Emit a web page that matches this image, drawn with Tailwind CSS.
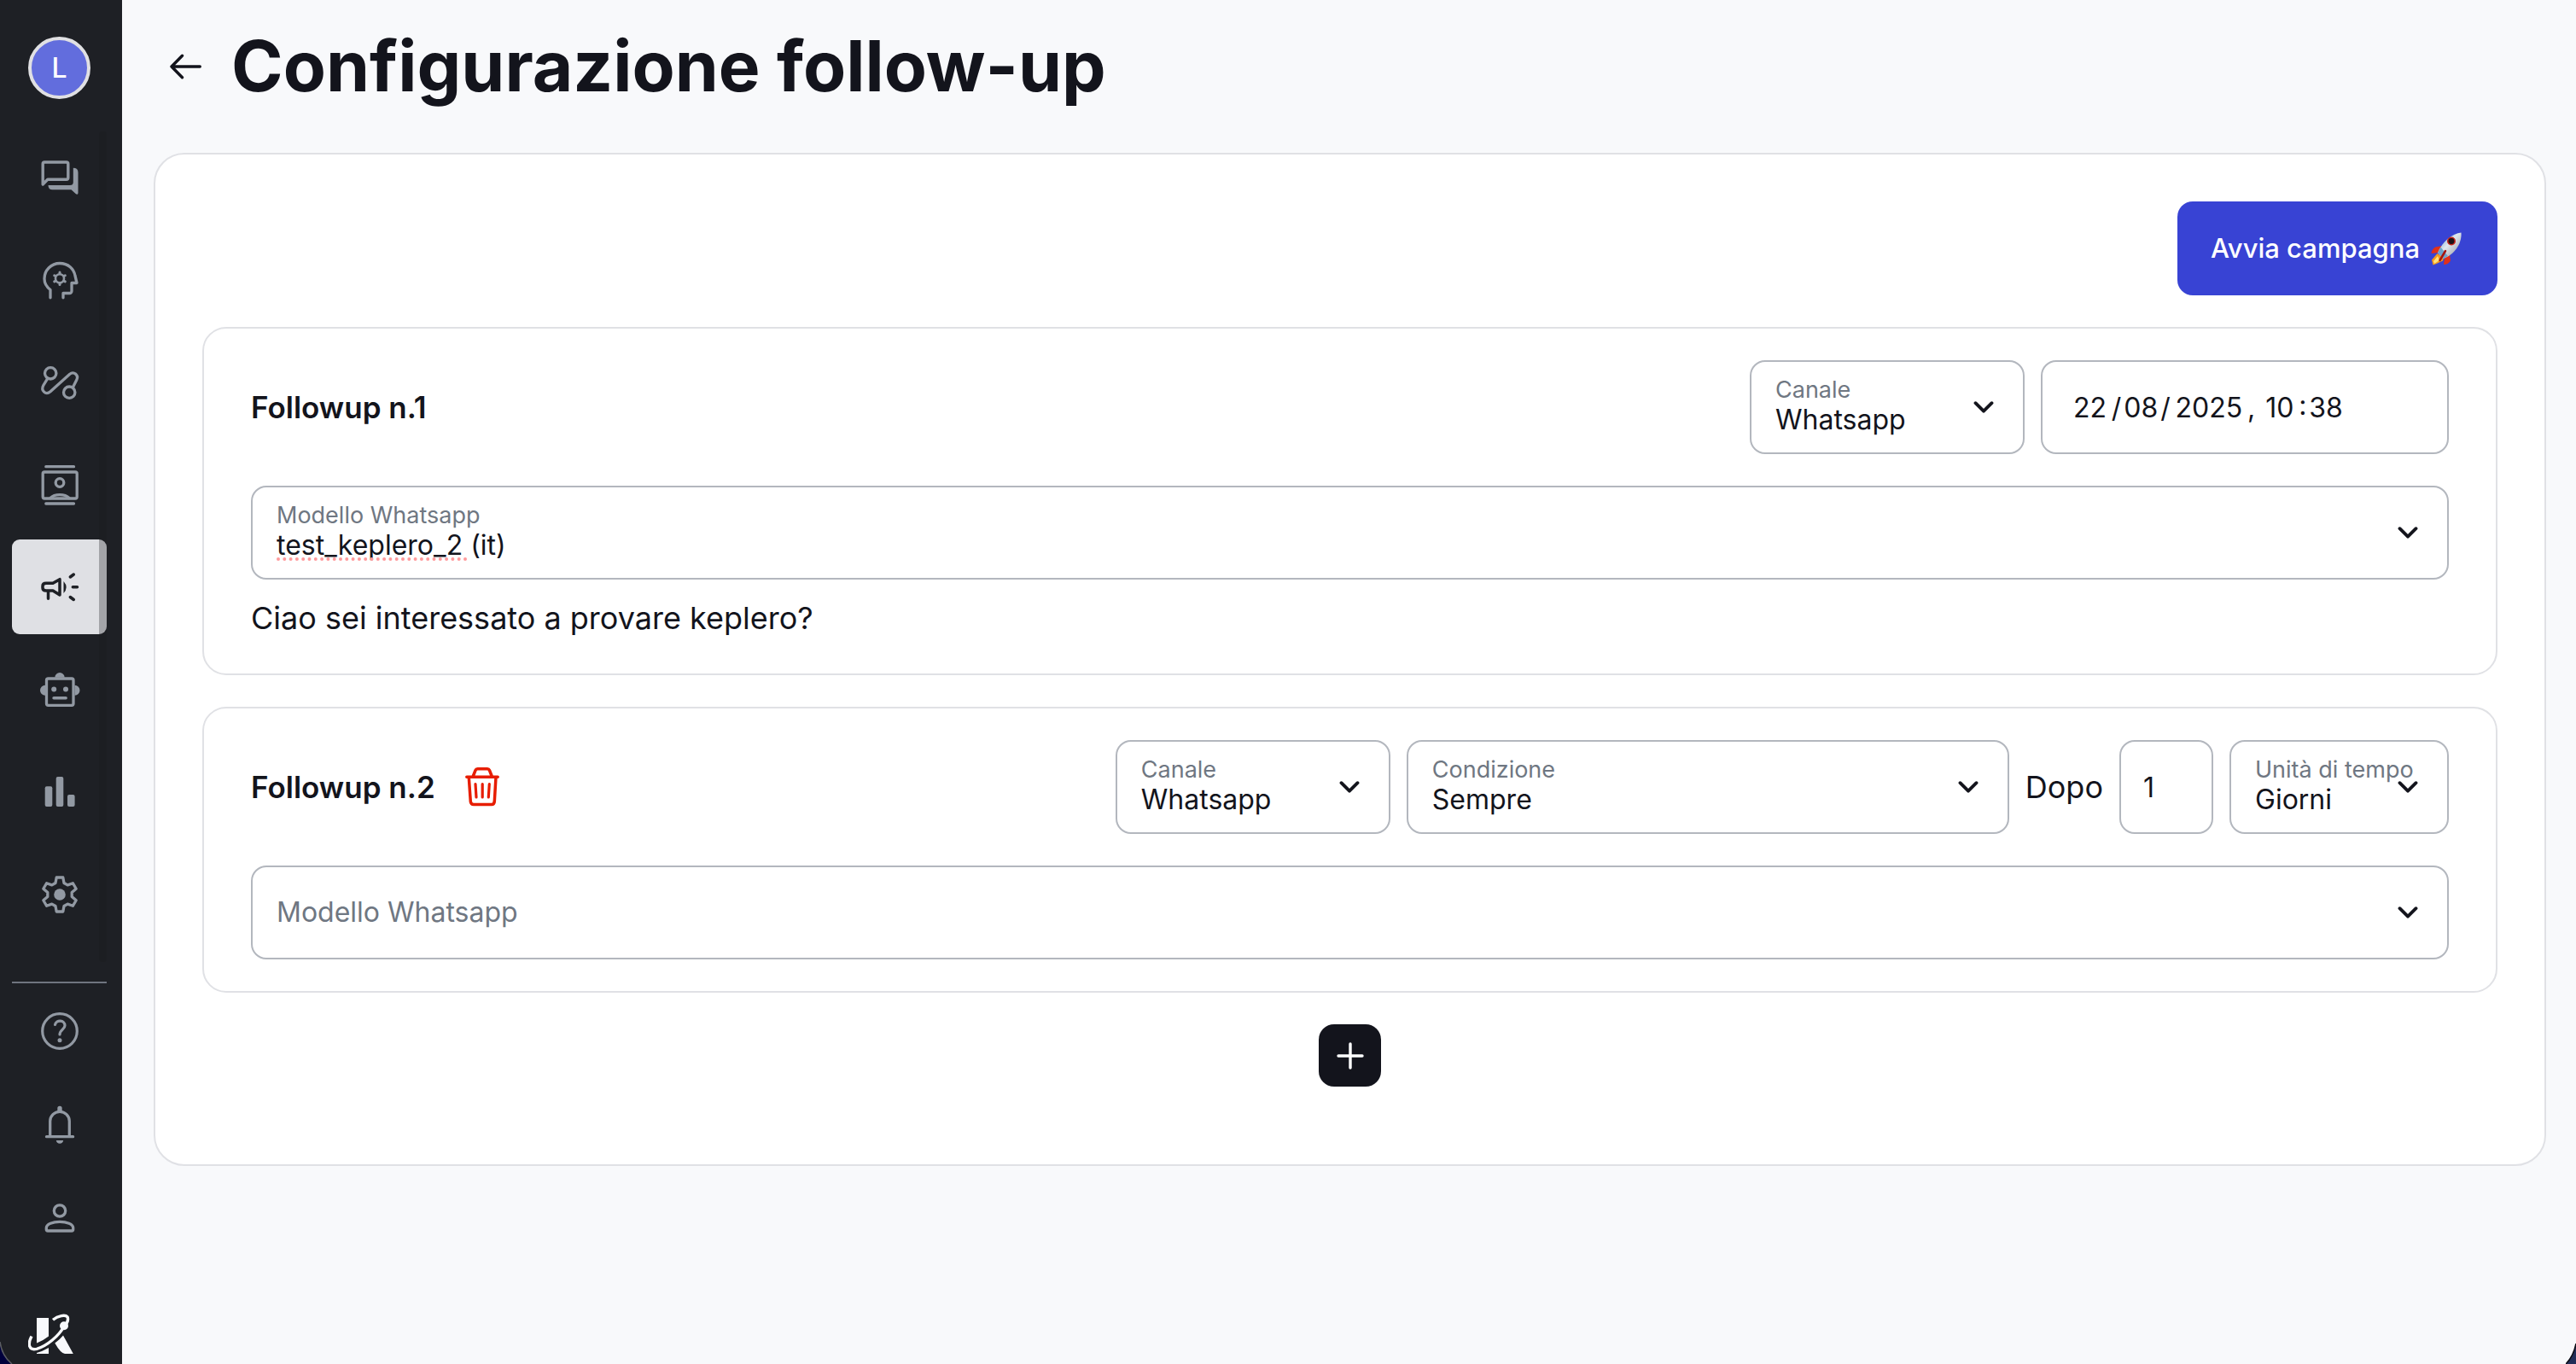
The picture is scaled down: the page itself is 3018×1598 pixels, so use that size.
<!DOCTYPE html>
<html lang="it">
<head>
<meta charset="utf-8">
<meta name="viewport" content="width=device-width, initial-scale=1">
<title>Configurazione follow-up</title>
<script src="https://cdn.jsdelivr.net/npm/@tailwindcss/browser@4"></script>
</head>
<body class="bg-[#f8f9fb] font-['Inter',sans-serif] text-[#13141c]">
<div class="relative flex min-h-screen">

  <!-- Sidebar -->
  <aside class="flex w-[143px] shrink-0 flex-col bg-[#1e2025] pl-[14px] pr-[18px] pt-[43px] text-[#9299a3]">
    <button type="button" aria-label="Account" class="flex size-[73px] items-center justify-center self-center rounded-full border-4 border-[#e0e0e3] bg-[#626ddd] text-[32px] font-medium leading-none text-white">L</button>

    <nav aria-label="Principale" class="relative mt-9 flex flex-col gap-[9px] pb-6">
      <a href="#" aria-label="Conversazioni" class="flex h-[111px] items-center justify-center rounded-[9px]">
        <svg class="size-12" viewBox="0 0 48 48" fill="none"><path d="M4.2 32V8a2 2 0 0 1 2-2H31.8a2 2 0 0 1 2 2V24.3a2 2 0 0 1-2 2H9.8Z" stroke="currentColor" stroke-width="3.4" stroke-linejoin="round"/><path d="M39.8 12.7Q45.5 12.7 45.5 18V42Q45.5 44.4 43 43.3L37.5 38.3H15.5Q10.5 38.3 10.5 33H36Q39.8 33 39.8 29.5Z" fill="currentColor"/></svg>
      </a>
      <a href="#" aria-label="Conoscenza" class="flex h-[111px] items-center justify-center rounded-[9px]">
        <svg class="size-12" viewBox="0 0 48 48" fill="none" stroke="currentColor" stroke-linecap="round" stroke-linejoin="round"><path d="M13 44.8V35.5C8.500 32 6 27.500 6 22.500A18 18 0 0 1 24 4.500C34 4.500 40.500 11 42 19L44 27.500H38V37a2.500 2.500 0 0 1-2.500 2.500H28V44.8" stroke-width="3.300"/><circle cx="24" cy="22.300" r="5" stroke-width="2.600"/><path d="M24 16.300V15M24 28.300V29.600M29.200 19.300l1.100-.6M29.200 25.300l1.100.6M18.800 19.300l-1.100-.6M18.800 25.300l-1.100.6" stroke-width="3"/></svg>
      </a>
      <a href="#" aria-label="Flussi" class="flex h-[111px] items-center justify-center rounded-[9px]">
        <svg class="size-12" viewBox="0 0 48 48" fill="none" stroke="currentColor" stroke-width="3.300"><circle cx="13.200" cy="13.300" r="6.700"/><circle cx="35.200" cy="35.700" r="6.700"/><path d="M9.800 19.300L4.800 27.500C1.500 33.500 7.500 39.500 13 34.800L35.500 14.500C40.500 10.300 46.500 15.500 43.800 21L39.300 30"/></svg>
      </a>
      <a href="#" aria-label="Contatti" class="flex h-[111px] items-center justify-center rounded-[9px]">
        <svg class="size-12" viewBox="0 0 48 48" fill="none" stroke="currentColor" stroke-width="3.300" stroke-linecap="round"><path d="M7.800 2.700H40.500M7.800 46H40.500"/><rect x="4.200" y="9" width="40" height="31" rx="2"/><circle cx="24" cy="21.500" r="4.800"/><path d="M13 39.500C18 34.200 30 34.200 35 39.500"/></svg>
      </a>
      <a href="#" aria-label="Campagne" aria-current="page" class="flex h-[111px] items-center justify-center rounded-[9px] bg-[#dfe0e4] text-[#1e2025]">
        <svg class="size-12" viewBox="0 0 48 48" fill="none" stroke="currentColor" stroke-width="3.500" stroke-linecap="round" stroke-linejoin="round"><path d="M8 19.200H16L24 14.700V33L16 28H8C5 28 4 26.500 4 24.800V22.500C4 20.500 5 19.200 8 19.200ZM10.500 29V37.200M36.300 12L40.300 9M39.300 23.700H44.500M36.300 35.500L40.300 38.500"/><path d="M28.500 17Q34.800 24 28.500 31Z" fill="currentColor" stroke="none"/></svg>
      </a>
      <a href="#" aria-label="Assistente" class="flex h-[111px] items-center justify-center rounded-[9px]">
        <svg class="size-12" viewBox="0 0 48 48" fill="currentColor"><rect x="8.500" y="11" width="31.500" height="31.300" rx="2" fill="none" stroke="currentColor" stroke-width="3.300"/><path d="M18.300 9.700a5.700 5.700 0 0 1 11.400 0ZM7 30.700a6 6 0 0 1 0-12ZM41.500 30.700a6 6 0 0 0 0-12Z"/><circle cx="17.200" cy="23.400" r="3"/><circle cx="31" cy="23.400" r="3"/><path d="M17 33.700H31.200" stroke="currentColor" stroke-width="3.400" stroke-linecap="round"/></svg>
      </a>
      <a href="#" aria-label="Statistiche" class="flex h-[111px] items-center justify-center rounded-[9px]">
        <svg class="size-12" viewBox="0 0 48 48" fill="currentColor"><rect x="6.700" y="17.300" width="8.600" height="23.700" rx="2"/><rect x="19.700" y="6" width="8.600" height="35" rx="2"/><rect x="33" y="27" width="8.600" height="14" rx="2"/></svg>
      </a>
      <a href="#" aria-label="Impostazioni" class="flex h-[111px] items-center justify-center rounded-[9px]">
        <svg class="size-12" viewBox="0 0 48 48" fill="none"><path d="M19 10.500L20.200 4H27.800L29 10.500L33.200 12.900L39.400 10.700L43.200 17.300L38.200 21.600V26.400L43.200 30.700L39.400 37.300L33.200 35.100L29 37.500L27.800 44H20.200L19 37.500L14.800 35.100L8.600 37.300L4.800 30.700L9.800 26.400V21.600L4.800 17.300L8.600 10.700L14.800 12.900Z" stroke="currentColor" stroke-width="3.300" stroke-linejoin="round"/><circle cx="24" cy="24" r="6.800" fill="currentColor"/></svg>
      </a>
      <!-- Scroll track laid over the right edge of the list -->
      <span class="absolute bottom-0 right-0 top-0.5 w-[9px] rounded-[4px] bg-[#1a1a1f]/30"></span>
    </nav>

    <hr class="mt-[23px] h-0.5 border-0 bg-[#6f757f]">

    <a href="#" aria-label="Aiuto" class="flex h-[111px] items-center justify-center">
      <svg class="size-12" viewBox="0 0 48 48" fill="none" stroke="currentColor" stroke-width="3.200" stroke-linecap="round"><circle cx="24" cy="24" r="20.300"/><path d="M18.500 16.500C19.700 10.300 30 10.600 30 17.500C30 22 24 22.500 24 28"/><circle cx="24" cy="34.700" r="2.500" fill="currentColor" stroke="none"/></svg>
    </a>
    <a href="#" aria-label="Notifiche" class="flex h-[110px] items-center justify-center">
      <svg class="size-12" viewBox="0 0 48 48" fill="none" stroke="currentColor" stroke-width="3.300" stroke-linecap="round"><path d="M12.700 37V19.600a11.300 11.300 0 0 1 22.600 0V37M8.500 37.700H39.600"/><path d="M21.300 7.500V4.500a2.700 2.700 0 0 1 5.400 0V7.500ZM19.800 42H28.200Q27.500 45.800 24 45.800Q20.500 45.800 19.800 42Z" fill="currentColor" stroke="none"/></svg>
    </a>
    <a href="#" aria-label="Profilo" class="flex h-[110px] items-center justify-center">
      <svg class="size-12" viewBox="0 0 48 48" fill="none" stroke="currentColor" stroke-width="3.300"><circle cx="24" cy="14.500" r="6.700"/><path d="M8.300 34.500C8.300 25 39.700 25 39.700 34.500V36.300a1.700 1.700 0 0 1-1.700 1.700H10a1.700 1.700 0 0 1-1.700-1.700Z"/></svg>
    </a>

    <svg class="ml-[19px] mt-14 h-[47px] w-[53px]" viewBox="0 0 53 47" fill="#f8f9fc"><path d="M10 5H24V26.500Q17 32 10 34.500ZM24 40V47H10V46Q17 44 24 40ZM31.300 34.500Q37 30.500 41 25.500L52.800 47H43Q38 46.500 31.300 34.500Z"/><path d="M4 26.500C-1 36 1 43.500 10 41.300C22 38 36 26 42 15M29 7.300C35 2.300 43.500 .8 46 3.800C47.200 6.500 46 10.500 43 14" fill="none" stroke="#f8f9fc" stroke-width="3.400"/><circle cx="42" cy="14.300" r="5"/></svg>
  </aside>

  <!-- Page content -->
  <main class="min-w-0 flex-1 px-[37px]">
    <header class="mb-6 flex h-[155px] items-center gap-[35px] pl-[19px]">
      <a href="#" aria-label="Indietro">
        <svg class="h-[30px] w-[37px]" viewBox="0 0 37 30" fill="none" stroke="currentColor" stroke-width="3.400" stroke-linecap="round" stroke-linejoin="round"><path d="M35.300 15H2M14.500 2.300L2 15L14.500 27.700"/></svg>
      </a>
      <h1 class="text-[82px] font-bold leading-[100px]">Configurazione follow-up</h1>
    </header>

    <form class="mr-[-2px] flex flex-col gap-[37px] rounded-[36px] border-2 border-[#e0e1e5] bg-white px-[55px] pb-[91px] pt-[55px]">
      <button type="button" class="flex h-[110px] items-center gap-[10px] self-end rounded-[18px] bg-[#3843d4] px-[39px] text-[31px] font-medium text-white">
        Avvia campagna
        <svg class="h-11 w-[42px]" viewBox="0 0 42 44" role="img" aria-label="Razzo">
          <defs><linearGradient id="hull" x1="0" y1="0" x2="1" y2="1"><stop offset="0" stop-color="#4f8fc4"/><stop offset=".45" stop-color="#dfe8ee"/><stop offset="1" stop-color="#8d8b98"/></linearGradient></defs>
          <path d="M16 19L8 20.500Q4 23 3.500 28L12 27ZM25 29L26 36.500Q23 41 18 41L19 33Z" fill="#e0301a"/>
          <path d="M10.500 28L4 35.500L5.500 41.500L10.500 39.500L17 36.500L18 33Z" fill="#f59b1b"/>
          <path d="M11 31L6 37L7 40L13 36Z" fill="#ffe27a"/>
          <path d="M38.500 3.500C28 4.500 16.500 14 11 27L17.500 34C30 29.500 39.500 17 38.500 3.500Z" fill="url(#hull)"/>
          <path d="M14.500 20.500L11 27L17.500 34L23 31Z" fill="#6ea4cd"/>
          <circle cx="27" cy="13.500" r="5" fill="#c5231b"/><circle cx="27" cy="13.500" r="3.400" fill="#1a1216"/>
          <path d="M20 25L13.500 36" stroke="#a51510" stroke-width="2.500" stroke-linecap="round"/>
        </svg>
      </button>

      <section class="rounded-[28px] border-2 border-[#e0e1e5] px-[55px] py-[37px]">
        <div class="flex items-center gap-[19px]">
          <h2 class="mr-auto text-[35px] font-semibold leading-[44px]">Followup n.1</h2>
          <div class="relative h-[110px] w-[322px]">
            <select id="canale1" class="h-full w-full appearance-none rounded-[18px] border-2 border-[#b3b7be] bg-white pl-7 pr-20 pt-[29px] text-[32px]"><option>Whatsapp</option></select>
            <label for="canale1" class="pointer-events-none absolute left-[30px] top-[19px] whitespace-nowrap text-[27px] leading-8 text-[#6f7782]">Canale</label>
            <svg class="pointer-events-none absolute right-9 top-12 h-[14px] w-6" viewBox="0 0 24 14" fill="none" stroke="currentColor" stroke-width="3.800" stroke-linecap="round" stroke-linejoin="round"><path d="M2.500 2.200L12 11.700L21.500 2.200"/></svg>
          </div>
          <input type="text" aria-label="Data e ora di invio" value="22&#8202;&#8202;/&#8202;08&#8202;/&#8202;&#8202;2025&#8202;&#8202;, &#8202;10&#8202;&#8202;:&#8202;38" class="h-[110px] w-[478px] rounded-[18px] border-2 border-[#b3b7be] bg-white px-9 text-[32px]">
        </div>
        <div class="relative mt-[37px] h-[110px]">
          <select id="modello1" class="h-full w-full appearance-none rounded-[18px] border-2 border-[#b3b7be] bg-white pl-7 pr-20 pt-[29px] text-[32px]"><option>test_keplero_2 (it)</option></select>
          <label for="modello1" class="pointer-events-none absolute left-[30px] top-[19px] whitespace-nowrap text-[27px] leading-8 text-[#6f7782]">Modello Whatsapp</label>
          <!-- Spell-check mark -->
          <svg class="pointer-events-none absolute left-[30px] top-[84px] h-1 w-[224px]" viewBox="0 0 224 4" fill="none"><path d="M2 2H222" stroke="#ff9a9c" stroke-width="4" stroke-linecap="round" stroke-dasharray="0 7.300"/></svg>
          <svg class="pointer-events-none absolute right-9 top-12 h-[14px] w-6" viewBox="0 0 24 14" fill="none" stroke="currentColor" stroke-width="3.800" stroke-linecap="round" stroke-linejoin="round"><path d="M2.500 2.200L12 11.700L21.500 2.200"/></svg>
        </div>
        <p class="mt-[18px] text-[36px] leading-[55px]">Ciao sei interessato a provare keplero?</p>
      </section>

      <section class="rounded-[28px] border-2 border-[#e0e1e5] px-[55px] py-[37px]">
        <div class="flex items-center gap-[19px]">
          <div class="mr-auto flex items-center gap-[35px]">
            <h2 class="text-[35px] font-semibold leading-[44px]">Followup n.2</h2>
            <button type="button" aria-label="Elimina followup" class="text-[#e71d00]">
              <svg class="h-[46px] w-10" viewBox="0 0 40 46" fill="none" stroke="currentColor" stroke-width="3.500" stroke-linecap="round" stroke-linejoin="round"><path d="M1.800 11.300H38.200M9 11L12 3.500Q12.700 1.800 14.500 1.800H26Q27.800 1.800 28.500 3.500L31.500 11M4.300 11.500L6.300 40Q6.700 43.500 10 43.500H31Q34 43.500 34.300 40L36 11.500"/><path d="M12 19.500L13 35M20.200 19.500V35M28.300 19.500L27.300 35" stroke-width="3.200"/></svg>
            </button>
          </div>
          <div class="relative h-[110px] w-[322px]">
            <select id="canale2" class="h-full w-full appearance-none rounded-[18px] border-2 border-[#b3b7be] bg-white pl-7 pr-20 pt-[29px] text-[32px]"><option>Whatsapp</option></select>
            <label for="canale2" class="pointer-events-none absolute left-[30px] top-[19px] whitespace-nowrap text-[27px] leading-8 text-[#6f7782]">Canale</label>
            <svg class="pointer-events-none absolute right-9 top-12 h-[14px] w-6" viewBox="0 0 24 14" fill="none" stroke="currentColor" stroke-width="3.800" stroke-linecap="round" stroke-linejoin="round"><path d="M2.500 2.200L12 11.700L21.500 2.200"/></svg>
          </div>
          <div class="relative h-[110px] w-[706px]">
            <select id="condizione" class="h-full w-full appearance-none rounded-[18px] border-2 border-[#b3b7be] bg-white pl-7 pr-20 pt-[29px] text-[32px]"><option>Sempre</option></select>
            <label for="condizione" class="pointer-events-none absolute left-[30px] top-[19px] whitespace-nowrap text-[27px] leading-8 text-[#6f7782]">Condizione</label>
            <svg class="pointer-events-none absolute right-9 top-12 h-[14px] w-6" viewBox="0 0 24 14" fill="none" stroke="currentColor" stroke-width="3.800" stroke-linecap="round" stroke-linejoin="round"><path d="M2.500 2.200L12 11.700L21.500 2.200"/></svg>
          </div>
          <label for="dopo" class="text-[36px] leading-[44px]">Dopo</label>
          <input id="dopo" type="number" value="1" min="1" class="h-[110px] w-[110px] appearance-none rounded-[18px] border-2 border-[#b3b7be] bg-white pl-[26px] text-[32px]">
          <div class="relative h-[110px] w-[257px]">
            <select id="unita" class="h-full w-full appearance-none rounded-[18px] border-2 border-[#b3b7be] bg-white pl-7 pr-16 pt-[29px] text-[32px]"><option>Giorni</option></select>
            <label for="unita" class="pointer-events-none absolute left-[30px] top-[19px] whitespace-nowrap text-[27px] leading-8 text-[#6f7782]">Unità di tempo</label>
            <svg class="pointer-events-none absolute right-9 top-12 h-[14px] w-6" viewBox="0 0 24 14" fill="none" stroke="currentColor" stroke-width="3.800" stroke-linecap="round" stroke-linejoin="round"><path d="M2.500 2.200L12 11.700L21.500 2.200"/></svg>
          </div>
        </div>
        <div class="relative mt-[37px] h-[110px]">
          <select id="modello2" class="h-full w-full appearance-none rounded-[18px] border-2 border-[#b3b7be] bg-white pl-7 pr-20 text-[32px]"><option value=""></option></select>
          <label for="modello2" class="pointer-events-none absolute left-[30px] top-[35px] whitespace-nowrap text-[32px] leading-10 text-[#6f7782]">Modello Whatsapp</label>
          <svg class="pointer-events-none absolute right-9 top-12 h-[14px] w-6" viewBox="0 0 24 14" fill="none" stroke="currentColor" stroke-width="3.800" stroke-linecap="round" stroke-linejoin="round"><path d="M2.500 2.200L12 11.700L21.500 2.200"/></svg>
        </div>
      </section>

      <button type="button" aria-label="Aggiungi followup" class="flex size-[73px] items-center justify-center self-center rounded-[18px] bg-[#13141c] text-white">
        <svg class="size-8" viewBox="0 0 32 32" fill="none" stroke="currentColor" stroke-width="3.400" stroke-linecap="round"><path d="M16 2V30M2 16H30"/></svg>
      </button>
    </form>
  </main>

  <!-- Rounded window corners -->
  <svg class="absolute bottom-0 left-0 h-8 w-4" viewBox="0 0 16 32"><path d="M0 8Q2 23 14 32H0Z" fill="#00003c"/><path d="M0 6Q2 22 14 32" fill="none" stroke="#5b5d63" stroke-width="1.500"/></svg>
  <svg class="absolute bottom-0 right-0 h-6 w-3" viewBox="0 0 12 24"><path d="M12 0Q9 15 0 24H12Z" fill="#212e58"/><path d="M12 0Q9 15 0 24" fill="none" stroke="#0b0c14" stroke-width="1.500"/></svg>
</div>
</body>
</html>
